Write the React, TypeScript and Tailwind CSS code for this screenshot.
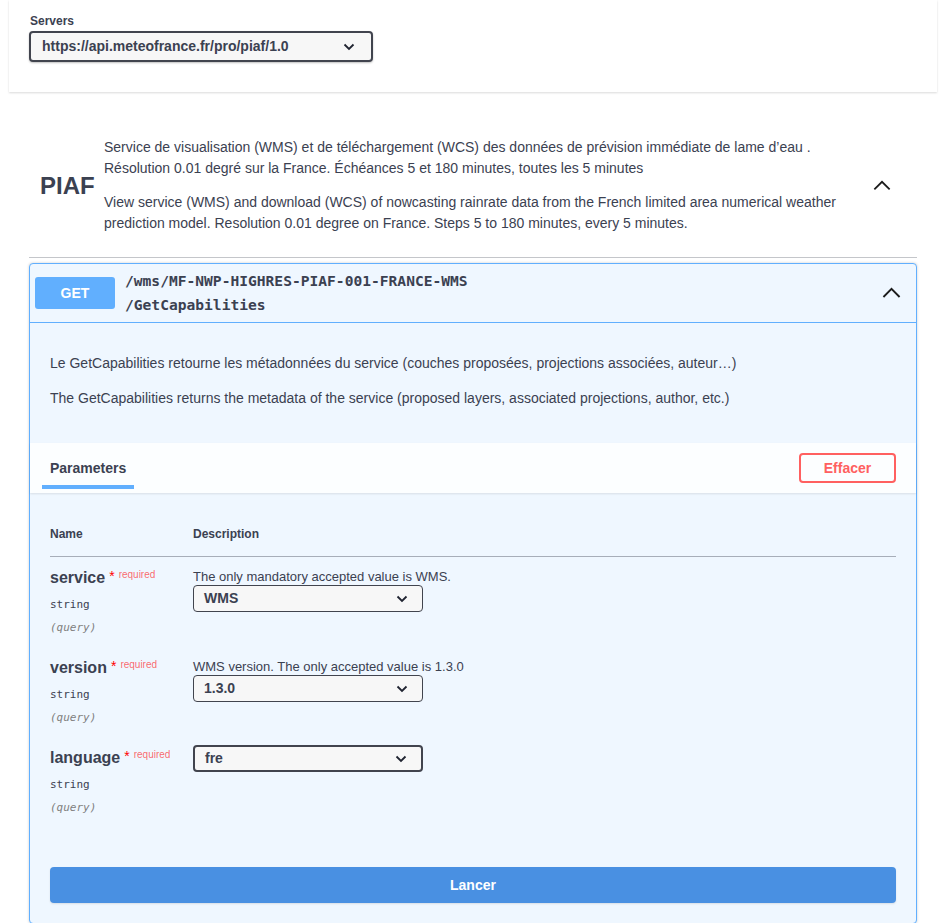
const sans = "font-['Liberation_Sans',Arial,sans-serif]";
const mono = "font-['DejaVu_Sans_Mono','Liberation_Mono',monospace]";

function ChevronDown() {
  return (
    <svg width="12" height="8" viewBox="0 0 12 8" className="shrink-0">
      <path d="M1.5 1.5 L6 6 L10.5 1.5" fill="none" stroke="#1f2330" strokeWidth="1.8" />
    </svg>
  );
}

function ChevronUp({ size = 20 }: { size?: number }) {
  return (
    <svg width={size} height={size * 0.6} viewBox="0 0 20 12">
      <path d="M1.5 10.5 L10 2 L18.5 10.5" fill="none" stroke="#1b1b1b" strokeWidth="2" />
    </svg>
  );
}

function Select({ value, width, focused }: { value: string; width: string; focused?: boolean }) {
  return (
    <div
      className={`flex items-center justify-between rounded-[4px] bg-[#f7f7f7] pl-[10px] pr-[14px] ${width} ${
        focused ? 'h-[27px] border-2 border-[#41444e]' : 'h-[27px] border border-[#41444e]'
      }`}
    >
      <span className="text-[14px] font-bold text-[#3b4151]">{value}</span>
      <ChevronDown />
    </div>
  );
}

const params = [
  { name: 'service', desc: 'The only mandatory accepted value is WMS.', value: 'WMS' },
  { name: 'version', desc: 'WMS version. The only accepted value is 1.3.0', value: '1.3.0' },
  { name: 'language', desc: '', value: 'fre', focused: true },
];

export default function App() {
  return (
    <div className={`${sans} min-h-[923px] bg-white text-[#3b4151]`}>
      {/* Servers */}
      <div className="ml-[9px] w-[928px] bg-white pt-[14px] pb-[30px] shadow-[0_1px_2px_0_rgba(0,0,0,0.15)]">
        <div className="ml-[21px] text-[12px] font-bold leading-[15px]">Servers</div>
        <div className="ml-[20px] mt-[2px] flex h-[31px] w-[344px] items-center justify-between rounded-[4px] border-2 border-[#41444e] bg-[#f7f7f7] pl-[11px] pr-[16px] shadow-[0_1px_2px_0_rgba(0,0,0,0.25)]">
          <span className="text-[14px] font-bold">https://api.meteofrance.fr/pro/piaf/1.0</span>
          <ChevronDown />
        </div>
      </div>

      <div className="ml-[29px] w-[888px]">
        {/* Tag header */}
        <div className="mt-[45px] flex items-center border-b border-[rgba(59,65,81,0.3)] pb-[23px]">
          <div className="w-[75px] pl-[11px] text-[24px] font-bold">PIAF</div>
          <div className="flex-1 text-[14px] leading-[21px]">
            <p>
              Service de visualisation (WMS) et de téléchargement (WCS) des données de prévision immédiate de lame d’eau .
              Résolution 0.01 degré sur la France. Échéances 5 et 180 minutes, toutes les 5 minutes
            </p>
            <p className="mt-[13px] w-[740px]">
              View service (WMS) and download (WCS) of nowcasting rainrate data from the French limited area numerical weather
              prediction model. Resolution 0.01 degree on France. Steps 5 to 180 minutes, every 5 minutes.
            </p>
          </div>
          <div className="mr-[26px] flex items-center">
            <ChevronUp size={18} />
          </div>
        </div>

        {/* Operation block */}
        <div className="mt-[5px] rounded-[4px] border border-[#61affe] bg-[#eff7ff] shadow-[0_0_3px_rgba(0,0,0,0.19)]">
          <div className="flex items-center border-b border-[#61affe] p-[5px]">
            <div className="flex h-[32px] w-[80px] items-center justify-center rounded-[3px] bg-[#61affe] text-[14px] font-bold text-white">
              GET
            </div>
            <div className={`${mono} ml-[10px] flex-1 text-[14.6px] font-bold leading-[24px]`}>
              <div>/wms/MF-NWP-HIGHRES-PIAF-001-FRANCE-WMS</div>
              <div>/GetCapabilities</div>
            </div>
            <div className="mr-[10px]">
              <ChevronUp size={19} />
            </div>
          </div>

          <div className="px-[20px] pt-[32px] pb-[36px] text-[14px] leading-[17px]">
            <p>Le GetCapabilities retourne les métadonnées du service (couches proposées, projections associées, auteur…)</p>
            <p className="mt-[18px]">
              The GetCapabilities returns the metadata of the service (proposed layers, associated projections, author, etc.)
            </p>
          </div>

          {/* Parameters header */}
          <div className="flex h-[50px] items-center justify-between bg-[rgba(255,255,255,0.8)] px-[20px] shadow-[0_1px_2px_rgba(0,0,0,0.1)]">
            <div className="relative flex h-full items-center">
              <span className="text-[14px] font-bold">Parameters</span>
              <div className="absolute bottom-[4px] left-[-8px] h-[4px] w-[92px] bg-[#61affe]" />
            </div>
            <div className="flex h-[30px] w-[97px] items-center justify-center rounded-[4px] border-2 border-[#ff6060] text-[14px] font-bold text-[#ff6060]">
              Effacer
            </div>
          </div>

          {/* Parameters table */}
          <div className="px-[20px] pt-[34px]">
            <div className="flex border-b border-[rgba(59,65,81,0.4)] pb-[14px] text-[12px] font-bold leading-[15px]">
              <div className="w-[143px]">Name</div>
              <div>Description</div>
            </div>
            {params.map((p) => (
              <div key={p.name} className="flex pt-[11px] pb-[12px]">
                <div className="w-[143px]">
                  <div className="flex items-start">
                    <span className="text-[16px] font-bold leading-[20px]">{p.name}</span>
                    <span className="ml-[4px] text-[14px] leading-[16px] text-[#ff0000]">*</span>
                    <span className="ml-[4px] text-[10px] leading-[13px] text-[rgba(255,0,0,0.6)]">required</span>
                  </div>
                  <div className={`${mono} mt-[9px] text-[11px] leading-[15px] text-[#3b4151]`}>string</div>
                  <div className={`${mono} mt-[8px] text-[11px] italic leading-[15px] text-[#808080]`}>(query)</div>
                </div>
                <div>
                  {p.desc && <div className="mt-[1px] text-[13px] leading-[15px]">{p.desc}</div>}
                  <div className={p.desc ? 'mt-[1px]' : '-mt-[3px]'}>
                    <Select value={p.value} width="w-[230px]" focused={p.focused} />
                  </div>
                </div>
              </div>
            ))}
          </div>

          <div className="px-[20px] pt-[40px] pb-[20px]">
            <div className="flex h-[36px] items-center justify-center rounded-[4px] bg-[#4990e2] text-[14px] font-bold text-white shadow-[0_1px_2px_rgba(0,0,0,0.1)]">
              Lancer
            </div>
          </div>
        </div>
      </div>
    </div>
  );
}
